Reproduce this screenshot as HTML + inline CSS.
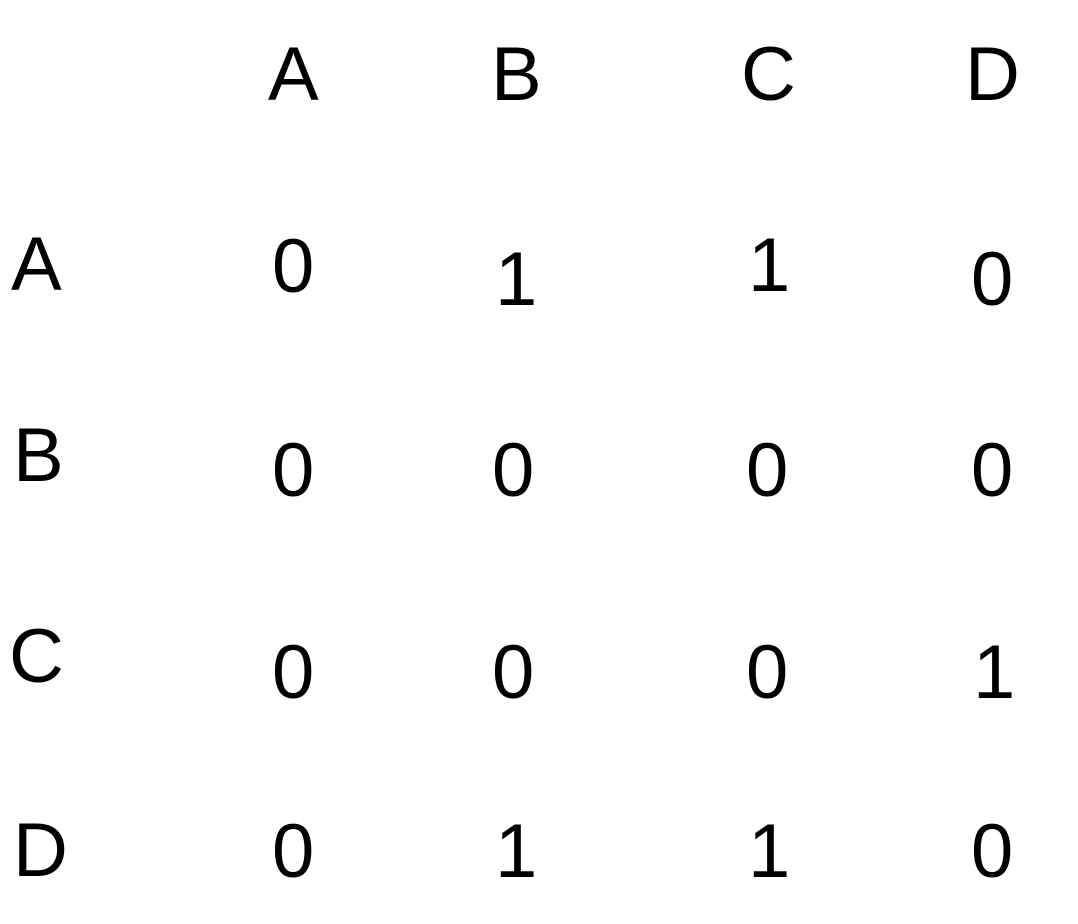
<!DOCTYPE html>
<html><head><meta charset="utf-8"><style>
html,body{margin:0;padding:0;background:#fff;}
body{width:1078px;height:924px;position:relative;overflow:hidden;font-family:"Liberation Sans",Arial,sans-serif;font-size:76px;line-height:1;color:#000;}
div{position:absolute;white-space:nowrap;}
</style></head><body>
<div style="left:268px;top:37px">A</div>
<div style="left:491px;top:37px">B</div>
<div style="left:741px;top:37px">C</div>
<div style="left:965px;top:37px">D</div>

<div style="left:11px;top:227px">A</div>
<div style="left:272px;top:229px">0</div>
<div style="left:495px;top:242px">1</div>
<div style="left:748px;top:228px">1</div>
<div style="left:971px;top:242px">0</div>

<div style="left:13px;top:418px">B</div>
<div style="left:272px;top:433px">0</div>
<div style="left:492px;top:433px">0</div>
<div style="left:746px;top:433px">0</div>
<div style="left:971px;top:433px">0</div>

<div style="left:9px;top:619px">C</div>
<div style="left:272px;top:635px">0</div>
<div style="left:492px;top:635px">0</div>
<div style="left:746px;top:635px">0</div>
<div style="left:973px;top:635px">1</div>

<div style="left:13px;top:813px">D</div>
<div style="left:272px;top:814px">0</div>
<div style="left:495px;top:814px">1</div>
<div style="left:748px;top:814px">1</div>
<div style="left:971px;top:814px">0</div>
</body></html>
